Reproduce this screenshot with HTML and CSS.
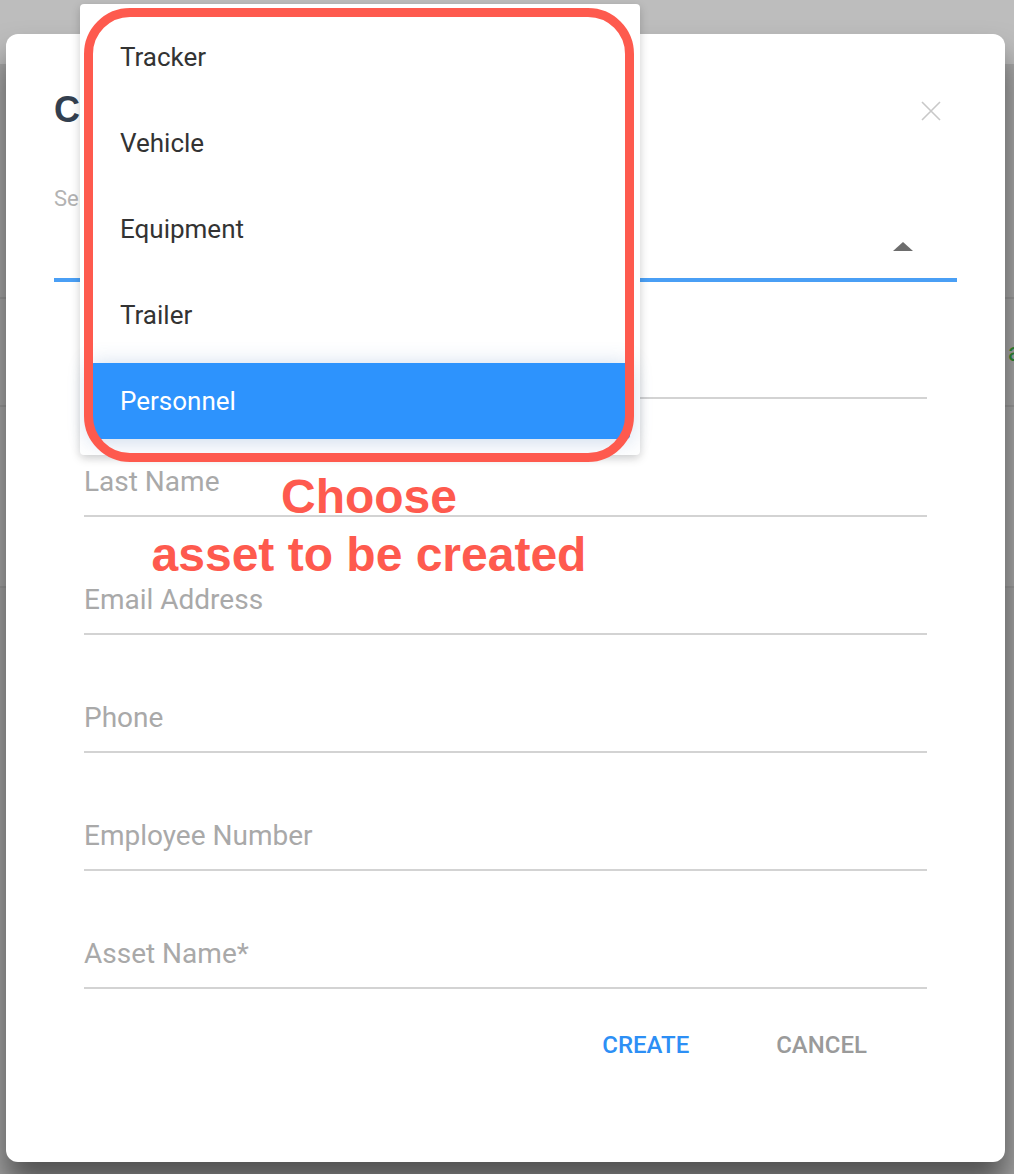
FILE: index.html
```html
<!DOCTYPE html>
<html>
<head>
<meta charset="utf-8">
<link rel="stylesheet" href="styles.css">
</head>
<body>
<div class="page">
  <div class="page-top"></div>
  <div class="page-row r1"></div>
  <div class="page-row r2"><span class="green">a</span></div>
  <div class="page-row r3"></div>
  <div class="page-rest"></div>
</div>

<div class="modal">
  <div class="modal-head">
    <h1 class="title">Create Asset</h1>
    <svg class="close" width="20" height="20" viewBox="0 0 20 20"><path d="M1 1 L19 19 M19 1 L1 19" stroke="#c8c8c8" stroke-width="1.6" fill="none"/></svg>
  </div>
  <div class="select">
    <div class="select-label">Select Asset Type</div>
    <div class="select-row"><span class="caret"></span></div>
  </div>
  <div class="fields">
    <div class="field"><span class="label">First Name</span></div>
    <div class="field"><span class="label">Last Name</span></div>
    <div class="field"><span class="label">Email Address</span></div>
    <div class="field"><span class="label">Phone</span></div>
    <div class="field"><span class="label">Employee Number</span></div>
    <div class="field"><span class="label">Asset Name*</span></div>
  </div>
  <div class="actions">
    <span class="btn create">CREATE</span>
    <span class="btn cancel">CANCEL</span>
  </div>
</div>

<div class="menu">
  <div class="item">Tracker</div>
  <div class="item">Vehicle</div>
  <div class="item">Equipment</div>
  <div class="item">Trailer</div>
  <div class="item active">Personnel</div>
</div>

<div class="callout"></div>
<div class="callout-text">Choose<br>asset to be created</div>
</body>
</html>
```
FILE: styles.css
```css
html, body {
  margin: 0;
  padding: 0;
}
body {
  width: 1014px;
  height: 1174px;
  overflow: hidden;
  position: relative;
  font-family: Roboto, "Liberation Sans", sans-serif;
  background: #a6a6a6;
}
.page {
  display: flex;
  flex-direction: column;
  height: 1174px;
}
.page-top {
  height: 64px;
  background: #bdbdbd;
}
.page-row {
  border-bottom: 2px solid #9a9a9a;
  background: #a8a8a8;
}
.r1 { height: 233px; }
.r2 {
  height: 106px;
  display: flex;
  justify-content: flex-end;
  align-items: center;
}
.r3 { height: 179px; }
.page-rest {
  flex: 1;
  background: #a3a3a3;
}
.green {
  color: #2f8a35;
  font-size: 26px;
  margin-right: -8px;
}

.modal {
  position: absolute;
  left: 6px;
  top: 34px;
  width: 999px;
  height: 1128px;
  box-sizing: border-box;
  background: #fff;
  border-radius: 12px;
  box-shadow: 0 22px 30px rgba(0,0,0,0.5);
  padding: 54px 48px 0 48px;
}
.modal-head {
  display: flex;
  justify-content: space-between;
  align-items: center;
  height: 44px;
}
.title {
  margin: 0;
  font-family: "Liberation Sans", Arial, sans-serif;
  font-weight: bold;
  font-size: 36px;
  line-height: 44px;
  color: #333f4f;
}
.close {
  margin-right: 16px;
  margin-top: 2px;
}
.select {
  margin-top: 55px;
  border-bottom: 4px solid #4a9ff5;
}
.select-label {
  font-size: 22px;
  line-height: 24px;
  color: #b3b3b3;
}
.select-row {
  height: 67px;
  display: flex;
  justify-content: flex-end;
  align-items: center;
  padding-right: 44px;
  box-sizing: border-box;
  padding-top: 4px;
}
.caret {
  width: 0;
  height: 0;
  border-left: 10px solid transparent;
  border-right: 10px solid transparent;
  border-bottom: 9px solid #6d6d6d;
}
.fields {
  margin: 0 30px;
}
.field {
  height: 118px;
  box-sizing: border-box;
  border-bottom: 2px solid #d3d3d3;
  padding-top: 68px;
}
.field:first-child {
  height: 117px;
  padding-top: 67px;
}
.label {
  display: block;
  font-size: 28px;
  line-height: 30px;
  color: #a9a9a9;
}
.actions {
  display: flex;
  justify-content: flex-end;
  gap: 87px;
  margin-top: 41px;
  padding-right: 90px;
}
.btn {
  font-size: 24px;
  line-height: 30px;
  font-weight: 500;
}
.create { color: #2d8ff5; }
.cancel { color: #9a9a9a; }

.menu {
  position: absolute;
  left: 80px;
  top: 4px;
  width: 560px;
  box-sizing: border-box;
  background: #fff;
  border-radius: 4px;
  box-shadow: 0 3px 10px rgba(0,0,0,0.2);
  padding: 15px 10px 16px 10px;
  display: flex;
  flex-direction: column;
  gap: 10px;
}
.item {
  height: 76px;
  display: flex;
  align-items: center;
  padding-left: 30px;
  font-size: 26px;
  color: #333;
  border-radius: 4px;
}
.item.active {
  background: #2d93fd;
  color: #fff;
  box-shadow: 0 2px 22px rgba(60,110,180,0.28);
}

.callout {
  position: absolute;
  left: 84px;
  top: 8px;
  width: 550px;
  height: 454px;
  box-sizing: border-box;
  border: 9px solid #fe5a4e;
  border-radius: 46px;
}
.callout-text {
  position: absolute;
  left: 100px;
  top: 468px;
  width: 538px;
  text-align: center;
  font-family: "Liberation Sans", Arial, sans-serif;
  font-weight: bold;
  font-size: 48px;
  line-height: 58px;
  color: #fe5a4e;
}
```
